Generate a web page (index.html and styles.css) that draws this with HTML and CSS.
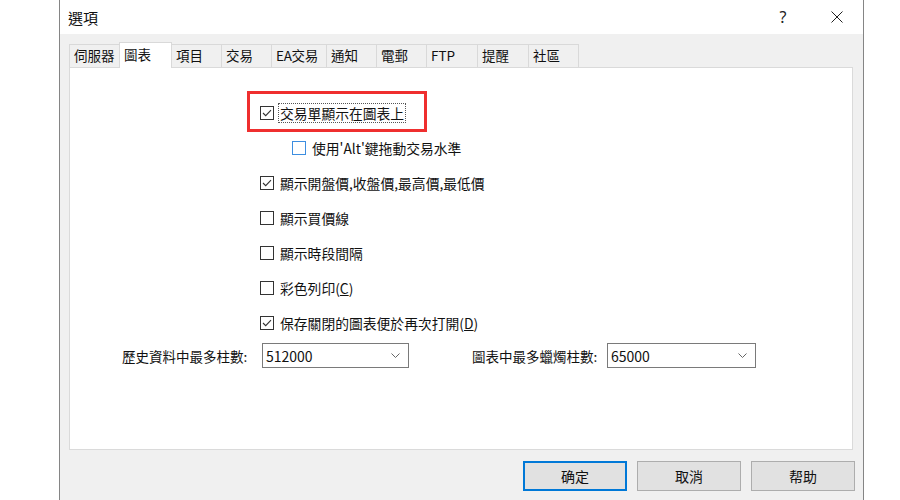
FILE: index.html
```html
<!DOCTYPE html>
<html lang="zh-Hant">
<head>
<meta charset="utf-8">
<title>選項</title>
<link rel="stylesheet" href="styles.css">
</head>
<body>
<div class="dialog">
  <div class="titlebar">
    <span class="title">選項</span>
    <span class="tb-btn help">?</span>
    <span class="tb-btn close">
      <svg width="12" height="12" viewBox="0 0 12 12"><path d="M0.5 0.5 L11.5 11.5 M11.5 0.5 L0.5 11.5" stroke="#222" stroke-width="1" fill="none"/></svg>
    </span>
  </div>
  <div class="body">
    <div class="tabs">
      <div class="tab">伺服器</div>
      <div class="tab active">圖表</div>
      <div class="tab">項目</div>
      <div class="tab">交易</div>
      <div class="tab wide">EA交易</div>
      <div class="tab">通知</div>
      <div class="tab">電郵</div>
      <div class="tab mid">FTP</div>
      <div class="tab mid">提醒</div>
      <div class="tab">社區</div>
    </div>
    <div class="panel">
      <div class="checks">
        <div class="row marked">
          <span class="cb"><svg width="12" height="12" viewBox="0 0 12 12"><path d="M2 6 L4.7 8.7 L10 3.2" stroke="#333" stroke-width="1.1" fill="none"/></svg></span>
          <span class="lbl focus">交易單顯示在圖表上</span>
          <span class="highlight"></span>
        </div>
        <div class="row sub">
          <span class="cb hot"></span>
          <span class="lbl">使用'Alt'鍵拖動交易水準</span>
        </div>
        <div class="row">
          <span class="cb"><svg width="12" height="12" viewBox="0 0 12 12"><path d="M2 6 L4.7 8.7 L10 3.2" stroke="#333" stroke-width="1.1" fill="none"/></svg></span>
          <span class="lbl">顯示開盤價,收盤價,最高價,最低價</span>
        </div>
        <div class="row">
          <span class="cb"></span>
          <span class="lbl">顯示買價線</span>
        </div>
        <div class="row">
          <span class="cb"></span>
          <span class="lbl">顯示時段間隔</span>
        </div>
        <div class="row">
          <span class="cb"></span>
          <span class="lbl">彩色列印(<u>C</u>)</span>
        </div>
        <div class="row">
          <span class="cb"><svg width="12" height="12" viewBox="0 0 12 12"><path d="M2 6 L4.7 8.7 L10 3.2" stroke="#333" stroke-width="1.1" fill="none"/></svg></span>
          <span class="lbl">保存關閉的圖表便於再次打開(<u>D</u>)</span>
        </div>
      </div>
      <div class="limits">
        <span class="field-label first">歷史資料中最多柱數:</span>
        <div class="combo first">
          <span class="combo-val">512000</span>
          <svg class="chev" width="9" height="5" viewBox="0 0 9 5"><path d="M0.5 0.5 L4.5 4.5 L8.5 0.5" stroke="#666" stroke-width="1" fill="none"/></svg>
        </div>
        <span class="field-label second">圖表中最多蠟燭柱數:</span>
        <div class="combo second">
          <span class="combo-val">65000</span>
          <svg class="chev" width="9" height="5" viewBox="0 0 9 5"><path d="M0.5 0.5 L4.5 4.5 L8.5 0.5" stroke="#666" stroke-width="1" fill="none"/></svg>
        </div>
      </div>
    </div>
    <div class="buttons">
      <button class="btn default">确定</button>
      <button class="btn">取消</button>
      <button class="btn">帮助</button>
    </div>
  </div>
</div>
</body>
</html>
```
FILE: styles.css
```css
* { box-sizing: border-box; }
html, body {
  margin: 0;
  padding: 0;
  background: #ffffff;
  font-family: "Noto Sans CJK TC", "Noto Sans", sans-serif;
  color: #111;
  overflow: hidden;
}
.dialog {
  margin-left: 59px;
  width: 805px;
  height: 500px;
  border-left: 1px solid #858585;
  border-right: 1px solid #858585;
  background: #f0f0f0;
  display: flex;
  flex-direction: column;
}
.titlebar {
  height: 34px;
  background: #fff;
  display: flex;
  align-items: center;
  padding-left: 8px;
}
.title {
  flex: 1;
  font-size: 15px;
  line-height: 20px;
  padding-top: 1px;
}
.tb-btn {
  height: 34px;
  display: flex;
  align-items: center;
  justify-content: center;
}
.help {
  width: 54px;
  font-family: "Noto Sans", sans-serif;
  font-size: 16px;
  font-weight: 400;
  color: #222;
  padding-bottom: 1px;
}
.close {
  width: 53px;
}
.body {
  flex: 1;
  padding: 10px 9px 0 9px;
  display: flex;
  flex-direction: column;
}
.tabs {
  display: flex;
  height: 23px;
}
.tab {
  width: 51px;
  height: 23px;
  border: 1px solid #d9d9d9;
  border-bottom: none;
  margin-right: -1px;
  padding: 0 0 0 4px;
  font-size: 13.5px;
  line-height: 21px;
  white-space: nowrap;
  background: #f0f0f0;
}
.tab.wide { width: 56px; letter-spacing: -0.3px; }
.tab.mid { width: 52px; }
.tab.active {
  width: 53px;
  height: 26px;
  margin-top: -2px;
  background: #fff;
  position: relative;
  z-index: 1;
  line-height: 23px;
}
.panel {
  width: 784px;
  height: 383px;
  background: #fff;
  border: 1px solid #dadada;
  padding: 27px 0 0 190px;
}
.checks {
  display: flex;
  flex-direction: column;
}
.row {
  height: 35px;
  display: flex;
  align-items: center;
  position: relative;
  font-size: 13.8px;
}
.row.sub { padding-left: 32px; }
.cb {
  width: 14px;
  height: 14px;
  border: 1px solid #333;
  background: #fff;
  display: flex;
  align-items: center;
  justify-content: center;
  flex: none;
}
.cb.hot { border-color: #3d8ee0; }
.lbl {
  margin-left: 6px;
  line-height: 18px;
  white-space: nowrap;
}
.lbl.focus {
  outline: 1px dotted #555;
  outline-offset: 0;
  padding: 0 1px;
  margin-left: 5px;
}
.highlight {
  position: absolute;
  left: -13px;
  top: -4px;
  width: 180px;
  height: 41px;
  border: 3px solid #ef2f2f;
  pointer-events: none;
}
.limits {
  margin-left: -138px;
  margin-top: 3px;
  height: 25px;
  display: flex;
  align-items: center;
  font-size: 13.5px;
}
.field-label {
  white-space: nowrap;
  line-height: 18px;
}
.field-label.first { width: 130px; margin-right: 10px; }
.field-label.second { width: 127px; margin-left: 63px; margin-right: 8px; }
.combo {
  height: 25px;
  border: 1px solid #7a7a7a;
  background: #fff;
  display: flex;
  align-items: center;
  padding: 0 8px 0 3px;
}
.combo.first { width: 147px; }
.combo.second { width: 149px; }
.combo-val {
  flex: 1;
  font-size: 14px;
  line-height: 18px;
}
.chev { flex: none; }
.buttons {
  display: flex;
  justify-content: flex-end;
  gap: 10px;
  margin-top: 11px;
  padding-right: 0;
  margin-right: -1px;
}
.btn {
  width: 104px;
  height: 30px;
  background: #e1e1e1;
  border: 1px solid #adadad;
  font-family: "Noto Sans CJK SC", "Noto Sans CJK TC", sans-serif;
  font-size: 14px;
  color: #111;
  padding: 0;
  line-height: 18px;
}
.btn.default {
  border: 2px solid #0078d7;
}
```
